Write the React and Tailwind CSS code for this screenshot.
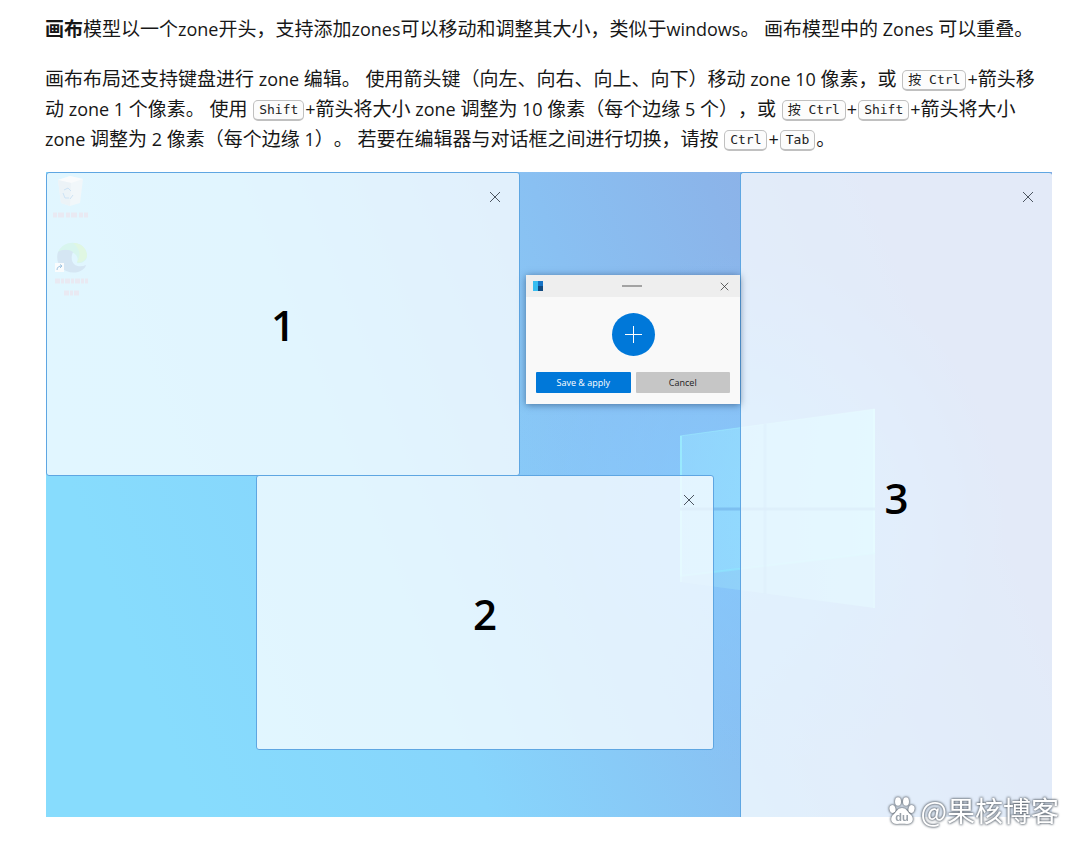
import React from "react";

const SANS = "font-['Open_Sans','Noto_Sans_CJK_SC',sans-serif]";

// Latin runs are set one step smaller than the Chinese text around them.
function Mixed({ children }) {
  return children.split(/([A-Za-z0-9 +]+)/).map((run, i) =>
    i % 2 === 1 ? (
      <span key={i} className="text-[18px]">
        {run}
      </span>
    ) : (
      run
    ),
  );
}

function Kbd({ children }) {
  return (
    <kbd className="mx-px inline-block rounded-[5px] border border-b-2 border-[#c0c0c0] bg-[#fcfcfc] px-[5px] align-middle font-['DejaVu_Sans_Mono','Noto_Sans_CJK_SC',monospace] text-[13px] leading-[18px] text-[#222222]">
      {children}
    </kbd>
  );
}

function Cross({ className }) {
  return (
    <svg viewBox="0 0 12 12" className={className} fill="none" stroke="currentColor" aria-hidden="true">
      <path d="M1 1L11 11M11 1L1 11" />
    </svg>
  );
}

function Zone({ number, className }) {
  return (
    <section
      className={`absolute flex items-center justify-center rounded-[3px] border border-[#5ea6e2] bg-white/75 ${className}`}
    >
      <button
        type="button"
        aria-label={`Close zone ${number}`}
        className="absolute top-[18px] right-[18px] flex size-3 items-center justify-center text-[#4c5560]"
      >
        <Cross className="size-3" />
      </button>
      <span className="pt-[2px] text-[42px] leading-[48px] font-semibold text-black">{number}</span>
    </section>
  );
}

function Wallpaper() {
  return (
    <svg viewBox="0 0 1006 645" preserveAspectRatio="none" className="absolute inset-0 size-full" aria-hidden="true">
      <defs>
        <linearGradient id="sky" gradientUnits="userSpaceOnUse" x1="120" y1="560" x2="960" y2="230">
          <stop offset="0" stopColor="#87dcfd" />
          <stop offset="0.3" stopColor="#87d5fc" />
          <stop offset="0.6" stopColor="#89c0f2" />
          <stop offset="0.78" stopColor="#8bb5ea" />
          <stop offset="1" stopColor="#8faae2" />
        </linearGradient>
        <radialGradient id="glow" gradientUnits="userSpaceOnUse" cx="700" cy="340" r="260">
          <stop offset="0" stopColor="#86ccff" stopOpacity="0.8" />
          <stop offset="0.5" stopColor="#86caff" stopOpacity="0.45" />
          <stop offset="1" stopColor="#86c4ff" stopOpacity="0" />
        </radialGradient>
        <linearGradient id="pane" x1="0" y1="0" x2="1" y2="0">
          <stop offset="0" stopColor="#96dcff" stopOpacity="0.65" />
          <stop offset="1" stopColor="#96e6ff" stopOpacity="0.9" />
        </linearGradient>
      </defs>
      <rect width="1006" height="645" fill="url(#sky)" />
      <rect width="1006" height="645" fill="url(#glow)" />
      <path d="M634 264L829 237V436L634 410Z" fill="url(#pane)" />
      <path d="M635 264V410M828 237V436" stroke="#9df3ff" strokeWidth="2" opacity="0.7" />
      <path d="M634 264L829 237" stroke="#9df0ff" opacity="0.5" />
      <path d="M634 404L829 381V436L634 410Z" fill="#8bbcf0" opacity="0.25" />
      <path d="M634 404L829 381" stroke="#8fecff" strokeWidth="2" opacity="0.5" />
      <path d="M634 337H829" stroke="#70b0e8" strokeWidth="3" opacity="0.6" />
      <path d="M719 252V422" stroke="#7cbcf0" strokeWidth="3" opacity="0.55" />
    </svg>
  );
}

function DesktopIcons() {
  return (
    <svg viewBox="0 0 60 130" className="absolute top-0 left-0 h-[130px] w-[60px]" aria-hidden="true">
      <path d="M12 8L24 4L37 7L34 31L24 34L15 31Z" fill="#f1f7fa" />
      <path d="M12 8L25 11L37 7L24 4Z" fill="#f9fbfc" />
      <path d="M25 11L24 34L15 31L12 8Z" fill="#ecf3f7" />
      <path d="M18 18l4-2 3 3M17 21l2 5h4M24 27l3-4" fill="none" stroke="#cde3f5" />
      <path d="M7 43H42" stroke="#e9e9f2" strokeWidth="5" strokeDasharray="4 1 6 2" />
      <path d="M12 80C18 67 38 68 41 82C42 90 34 92 31 91C34 85 28 76 12 80Z" fill="#d8f5ee" />
      <path d="M27 71C37 71 41 78 41 84C39 90 33 91 31 90C36 82 33 76 27 71Z" fill="#e0f7e2" />
      <path d="M12 80C8 93 19 103 32 100C38 98 40 94 40 93C32 97 22 92 27 80C23 77 16 77 12 80Z" fill="#d5e6f3" />
      <rect x="9" y="91" width="9" height="9" fill="#fafcfd" />
      <path d="M11 98C11 95 13 94 16 94M14 92.500L16 94L14 96" fill="none" stroke="#9fc3e0" />
      <path d="M9 109H42M18 121H34" stroke="#e9e9f2" strokeWidth="5" strokeDasharray="5 1 3 1" />
    </svg>
  );
}

function EditorDialog() {
  return (
    <div
      role="dialog"
      aria-label="Zone editor"
      className="absolute top-[103px] left-[480px] w-[214px] bg-[#f9f9f9] pb-[11px] shadow-[0_1px_7px_rgba(20,50,90,0.55)]"
    >
      <header className="flex h-[22px] items-center justify-between bg-[#eeeeee] px-[7px]">
        <svg viewBox="0 0 10 10" className="size-[10px]" aria-hidden="true">
          <rect width="6" height="10" fill="#38bdf0" />
          <rect x="5" width="5" height="5" fill="#1673c5" />
          <rect x="5" y="5" width="5" height="5" fill="#124a80" />
        </svg>
        <span className="h-[2px] w-5 bg-[#a3a3a3]" />
        <button type="button" aria-label="Close" className="mr-1 text-[#333333]">
          <Cross className="size-[9px]" />
        </button>
      </header>
      <div className="flex justify-center pt-4 pb-4">
        <button
          type="button"
          aria-label="Add zone"
          className="flex size-[43px] items-center justify-center rounded-full bg-[#0078d9] text-white"
        >
          <svg viewBox="0 0 17 17" className="size-[17px]" stroke="currentColor" aria-hidden="true">
            <path d="M8.500 0V17M0 8.500H17" />
          </svg>
        </button>
      </div>
      <div className="grid grid-cols-2 gap-[5px] px-[10px] text-[9px] leading-[21px]">
        <button type="button" className="rounded-[1px] bg-[#0078d9] text-white">
          Save &amp; apply
        </button>
        <button type="button" className="rounded-[1px] bg-[#c6c6c6] text-[#222222]">
          Cancel
        </button>
      </div>
    </div>
  );
}

function Watermark() {
  return (
    <div className="absolute -right-[7px] -bottom-[13px] flex items-center gap-[6px] font-['Noto_Sans_CJK_SC',sans-serif] text-[28px] leading-[40px] text-white [filter:drop-shadow(0_0_1px_#59616a)_drop-shadow(0_0_1px_#8a929b)]">
      <svg viewBox="0 0 26 30" className="h-[30px] w-[26px]" fill="currentColor" aria-hidden="true">
        <ellipse cx="3.500" cy="14" rx="3" ry="4" transform="rotate(-15 3.500 14)" />
        <ellipse cx="9" cy="6.500" rx="3" ry="4.300" />
        <ellipse cx="17" cy="6.500" rx="3" ry="4.300" />
        <ellipse cx="22.500" cy="14" rx="3" ry="4" transform="rotate(15 22.500 14)" />
        <path d="M13 13C17 13 18 16 21 19C26 23 24 29 18 29C15 28.500 11 28.500 8 29C2 29 0 23 5 19C8 16 9 13 13 13Z" />
        <text x="13" y="26" textAnchor="middle" fontSize="11" fontWeight="700" fill="#9aa2aa" fontFamily="Liberation Sans, sans-serif">
          du
        </text>
      </svg>
      <span>@果核博客</span>
    </div>
  );
}

export default function App() {
  return (
    <main className={`bg-white pt-[14px] pr-7 pb-8 pl-[45px] text-[#171717] ${SANS}`}>
      <div
        className="space-y-5 text-[19px] leading-[30px] whitespace-nowrap [text-spacing-trim:space-all]"
        lang="zh-CN"
      >
        <p>
          <strong>画布</strong>
          <Mixed>模型以一个zone开头，支持添加zones可以移动和调整其大小，类似于windows。 画布模型中的 Zones 可以重叠。</Mixed>
        </p>
        <p>
          <Mixed>{"画布布局还支持键盘进行 zone 编辑。 使用箭头键（向左、向右、向上、向下）移动 zone 10 像素，或 "}</Mixed>
          <Kbd>按 Ctrl</Kbd>
          <Mixed>+箭头移</Mixed>
          <br />
          <Mixed>{"动 zone 1 个像素。 使用 "}</Mixed>
          <Kbd>Shift</Kbd>
          <Mixed>{"+箭头将大小 zone 调整为 10 像素（每个边缘 5 个），或 "}</Mixed>
          <Kbd>按 Ctrl</Kbd>
          <Mixed>+</Mixed>
          <Kbd>Shift</Kbd>
          <Mixed>+箭头将大小</Mixed>
          <br />
          <Mixed>{"zone 调整为 2 像素（每个边缘 1）。 若要在编辑器与对话框之间进行切换，请按 "}</Mixed>
          <Kbd>Ctrl</Kbd>
          <Mixed>+</Mixed>
          <Kbd>Tab</Kbd>。
        </p>
      </div>
      <figure className="relative mt-[18px] ml-px aspect-[1006/645]">
        <div className="absolute inset-0 overflow-hidden">
          <Wallpaper />
          <Zone number={1} className="top-0 left-0 h-[304px] w-[474px]" />
          <Zone number={2} className="top-[303px] left-[210px] h-[275px] w-[458px]" />
          <Zone number={3} className="top-0 right-0 h-[650px] w-[312px] border-r-0" />
          <DesktopIcons />
          <EditorDialog />
        </div>
        <Watermark />
      </figure>
    </main>
  );
}
